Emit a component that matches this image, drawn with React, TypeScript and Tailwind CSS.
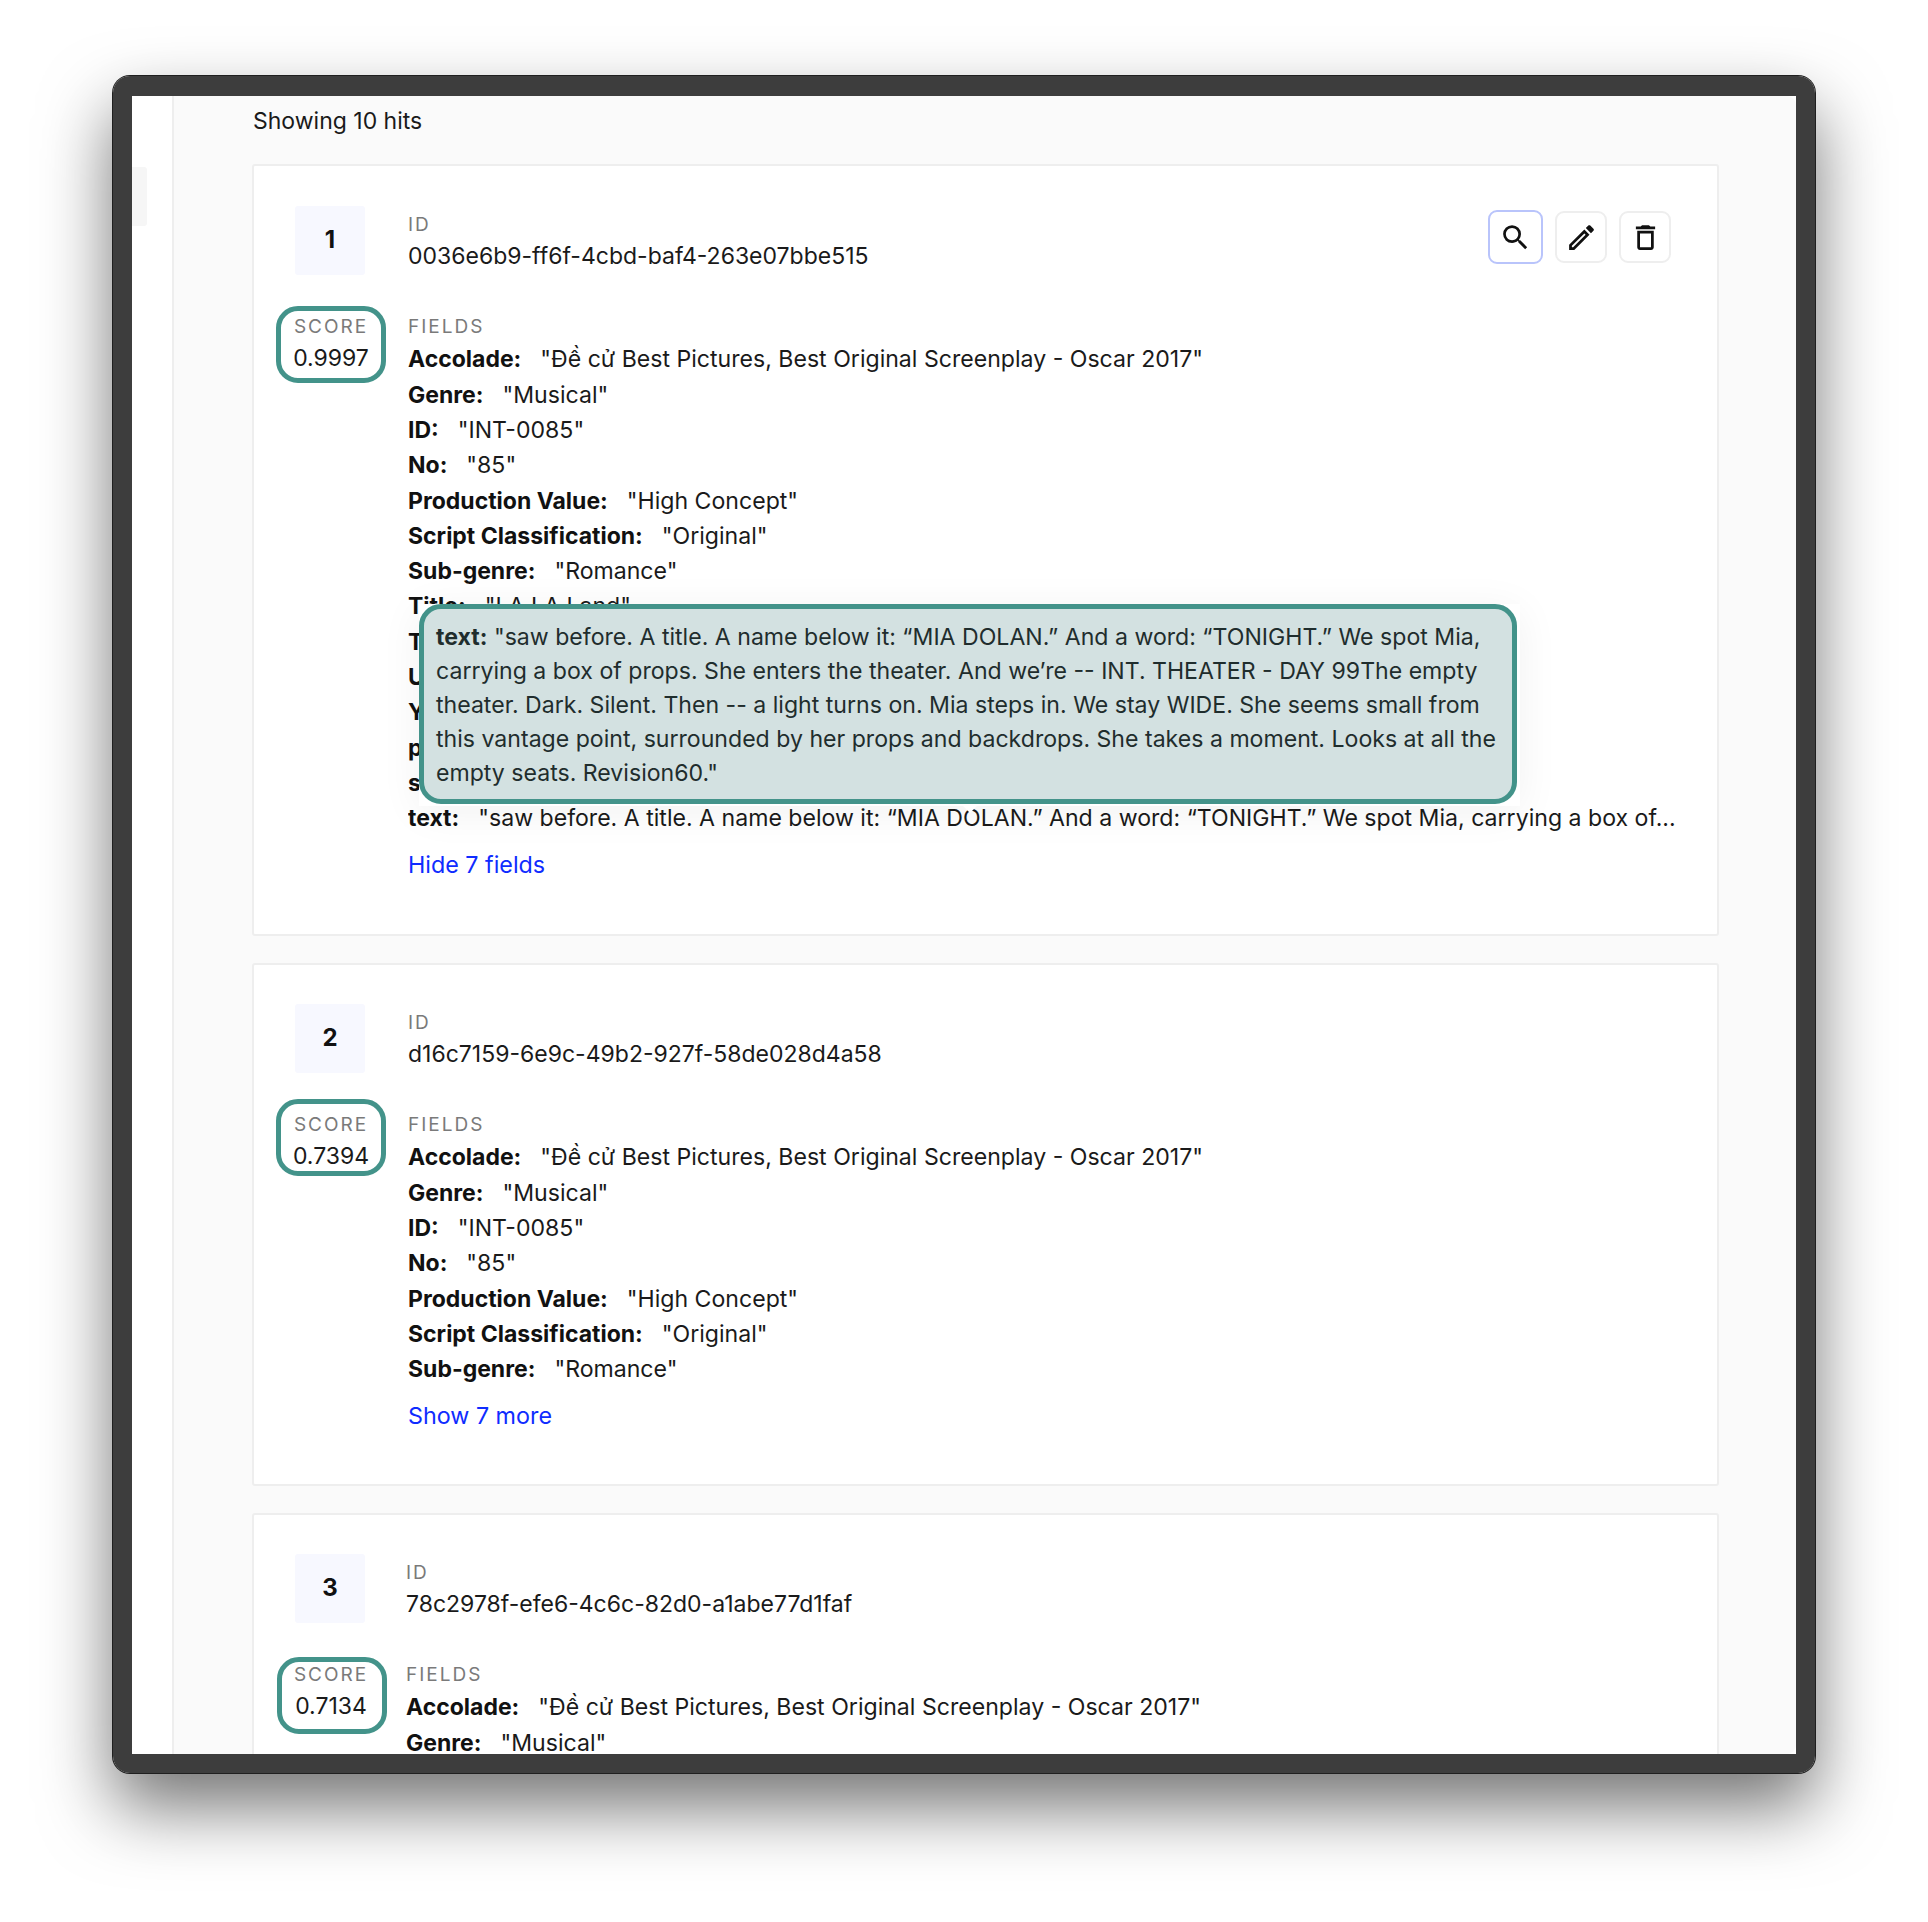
import { MdSearch, MdOutlineEdit, MdOutlineDelete } from "react-icons/md";

const firstRows: [string, string][] = [
  ["Accolade:", '"Đề cử Best Pictures, Best Original Screenplay - Oscar 2017"'],
  ["Genre:", '"Musical"'],
  ["ID:", '"INT-0085"'],
  ["No:", '"85"'],
  ["Production Value:", '"High Concept"'],
  ["Script Classification:", '"Original"'],
  ["Sub-genre:", '"Romance"'],
];

const moreRows: [string, string][] = [
  ["Title:", '"LA LA Land"'],
  ["Type:", '"Feature"'],
  ["URL:", '"lalaland.pdf"'],
  ["Year:", '"2016"'],
  ["page:", '"98"'],
  ["source:", '"lalaland.pdf"'],
];

const longText =
  '"saw before. A title. A name below it: “MIA DOLAN.” And a word: “TONIGHT.” We spot Mia, carrying a box of...';

function Row({ k, v }: { k: string; v: string }) {
  return (
    <div className="flex h-[35.3px] items-center gap-[19px] whitespace-nowrap text-[23.1px] text-[#1a1a1a]">
      <span className="text-[23px] font-bold text-[#111]">{k}</span>
      <span>{v}</span>
    </div>
  );
}

function Label({ children }: { children: string }) {
  return <div className="text-[19px] leading-[24px] tracking-[2px] text-[#7a7a7a]">{children}</div>;
}

function Hit({
  n,
  id,
  score,
  rows,
  link,
  className,
  boxClass,
  idClass,
  fieldsClass,
  children,
  actions,
}: {
  n: number;
  id: string;
  score: string;
  rows: [string, string][];
  link?: string;
  className: string;
  boxClass: string;
  idClass: string;
  fieldsClass: string;
  children?: React.ReactNode;
  actions?: React.ReactNode;
}) {
  return (
    <div className={`relative rounded-[3px] border-2 border-[#eeeeee] bg-white ${className}`}>
      <div className="flex items-start">
        <div className="ml-[41px] flex h-[69px] w-[70px] shrink-0 items-center justify-center rounded-[3px] bg-[#f7f8ff] pb-[2px] text-[24px] font-bold text-[#111]">
          {n}
        </div>
        <div className={`mt-[7px] ${idClass}`}>
          <Label>ID</Label>
          <div className="mt-[4px] text-[23px] leading-[30px] text-[#1a1a1a]">{id}</div>
        </div>
      </div>
      {actions}
      <div className="mt-[24px] flex items-start">
        <div className={`flex h-[77px] w-[110px] shrink-0 flex-col items-center rounded-[22px] border-[5px] border-[#43938a] ${boxClass}`}>
          <Label>SCORE</Label>
          <div className="mt-[2px] text-[23px] leading-[34px] text-[#1a1a1a]">{score}</div>
        </div>
        <div className={`mt-[16px] min-w-0 flex-1 ${fieldsClass}`}>
          <Label>FIELDS</Label>
          <div className="mt-[3px]">
            {rows.map(([k, v]) => (
              <Row key={k} k={k} v={v} />
            ))}
            {children}
          </div>
          {link && <div className="mt-[11px] text-[23.3px] leading-[36px] text-[#0f2cff]">{link}</div>}
        </div>
      </div>
    </div>
  );
}

export default function App() {
  return (
    <div className="h-[1922px] overflow-hidden bg-white pl-[113px] pt-[76px] font-['Inter',sans-serif]">
      <div className="h-[1697px] w-[1702px] overflow-hidden rounded-[17px] border-[19px] border-t-[20px] border-[#3d3d3d] shadow-[0_0_0_1px_#1f1f1f,0_34px_70px_rgba(0,0,0,0.55)]">
        <div className="flex h-full overflow-hidden rounded-[9px] bg-[#fafafa]">
          <div className="h-full w-[42px] shrink-0 border-r-2 border-[#eeeeee] bg-white pt-[71px]">
            <div className="h-[59px] w-[15px] rounded-r-[3px] bg-[#f6f6f6]"></div>
          </div>
          <div className="w-[1546px] shrink-0 pl-[78px]">
            <div className="flex h-[68px] items-start pl-[1px] pt-[10px] text-[23px] leading-[30px] text-[#1a1a1a]">Showing 10 hits</div>
            <Hit
              n={1}
              id="0036e6b9-ff6f-4cbd-baf4-263e07bbe515"
              score="0.9997"
              rows={[...firstRows, ...moreRows]}
              link="Hide 7 fields"
              className="h-[772px] w-[1467px] pt-[40px]"
              boxClass="ml-[22px] mt-[7px] pt-[4px]"
              idClass="ml-[43px]"
              fieldsClass="ml-[22px]"
              actions={
                <div className="absolute left-[1234px] top-[44px] flex items-center gap-[12px]">
                  <button className="flex h-[54px] w-[55px] items-center justify-center rounded-[9px] border-2 border-[#b9c4fb] bg-white">
                    <MdSearch className="h-[33px] w-[33px] text-[#111]" />
                  </button>
                  <button className="flex h-[52px] w-[52px] items-center justify-center rounded-[9px] border-2 border-[#eeeeee] bg-white">
                    <MdOutlineEdit className="h-[33px] w-[33px] text-[#111]" />
                  </button>
                  <button className="flex h-[52px] w-[52px] items-center justify-center rounded-[9px] border-2 border-[#eeeeee] bg-white">
                    <MdOutlineDelete className="h-[33px] w-[33px] text-[#111]" />
                  </button>
                </div>
              }
            >
              <div className="flex h-[35.3px] items-center gap-[19px] overflow-hidden whitespace-nowrap text-[23.1px] text-[#1a1a1a]">
                <span className="text-[23px] font-bold text-[#111]">text:</span>
                <span>{longText}</span>
              </div>
              <div className="absolute left-[165px] top-[438px] w-[1101px] bg-white pb-[2px] pr-[3px] shadow-[0_6px_40px_rgba(0,0,0,0.06)]">
                <div className="absolute bottom-[-4px] left-1/2 h-[14px] w-[14px] -translate-x-1/2 rotate-45 bg-white"></div>
                <div className="relative h-[200px] w-[1098px] rounded-[22px] border-[5px] border-[#43938a] bg-[#d3e1e1] py-[11px] pl-[12px] pr-[8px] text-[23.1px] leading-[34px] text-[#1f2d2d]">
                  <span className="font-bold">text:</span> "saw before. A title. A name below it: “MIA DOLAN.” And a word: “TONIGHT.” We spot Mia, carrying a box of props. She enters the theater. And we’re -- INT. THEATER - DAY 99The empty theater. Dark. Silent. Then -- a light turns on. Mia steps in. We stay WIDE. She seems small from this vantage point, surrounded by her props and backdrops. She takes a moment. Looks at all the empty seats. Revision60."
                </div>
              </div>
            </Hit>
            <Hit
              n={2}
              id="d16c7159-6e9c-49b2-927f-58de028d4a58"
              score="0.7394"
              rows={firstRows}
              link="Show 7 more"
              className="mt-[27px] h-[523px] w-[1467px] pt-[39px]"
              boxClass="ml-[22px] mt-[2px] pt-[9px]"
              idClass="ml-[43px]"
              fieldsClass="ml-[22px]"
            />
            <Hit
              n={3}
              id="78c2978f-efe6-4c6c-82d0-a1abe77d1faf"
              score="0.7134"
              rows={firstRows}
              className="mt-[27px] h-[600px] w-[1467px] pt-[39px]"
              boxClass="ml-[23px] mt-[10px] pr-[2px] pt-[1px]"
              idClass="ml-[41px]"
              fieldsClass="ml-[19px]"
            />
          </div>
        </div>
      </div>
    </div>
  );
}
